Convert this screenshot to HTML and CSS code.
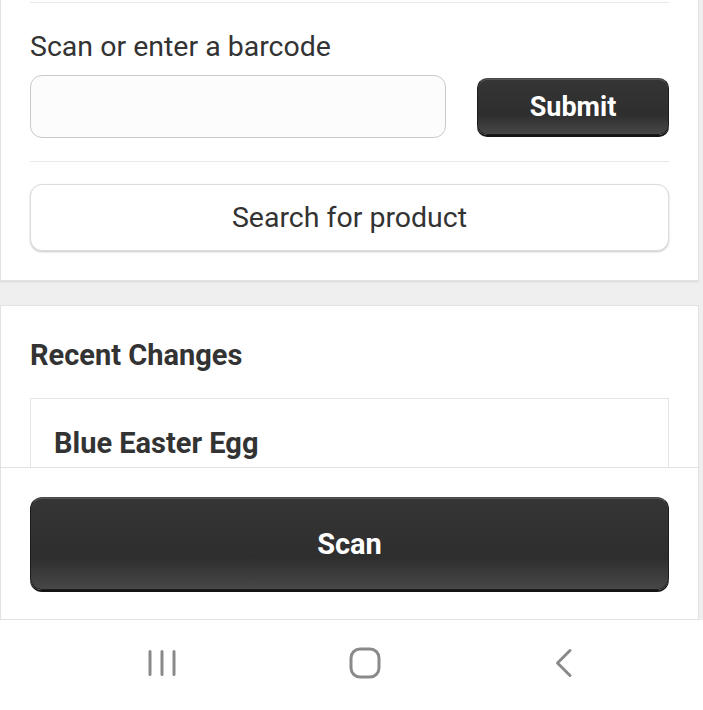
FILE: index.html
```html
<!DOCTYPE html>
<html>
<head>
<meta charset="utf-8">
<link rel="stylesheet" href="styles.css">
</head>
<body>
<div class="screen">
  <div class="app">
    <main class="scroll">
      <section class="card card-top">
        <hr class="divider">
        <label class="label" for="barcode">Scan or enter a barcode</label>
        <div class="entry-row">
          <input id="barcode" class="text-input" type="text">
          <button class="dark-btn submit-btn">Submit</button>
        </div>
        <hr class="divider divider-mid">
        <button class="light-btn">Search for product</button>
      </section>
      <section class="card card-recent">
        <h2 class="heading">Recent Changes</h2>
        <div class="change-item">
          <h3 class="item-title">Blue Easter Egg</h3>
        </div>
      </section>
    </main>
    <footer class="footer">
      <button class="dark-btn scan-btn">Scan</button>
    </footer>
  </div>
  <nav class="navbar">
    <svg class="nav-icon" width="30" height="30" viewBox="0 0 30 30">
      <path d="M3 3.5v23M15 3.5v23M27 3.5v23" stroke="#8a8a8a" stroke-width="3" stroke-linecap="round" fill="none"/>
    </svg>
    <svg class="nav-icon" width="32" height="32" viewBox="0 0 32 32">
      <rect x="2" y="2" width="28" height="28" rx="9" stroke="#8a8a8a" stroke-width="3" fill="none"/>
    </svg>
    <svg class="nav-icon" width="22" height="30" viewBox="0 0 22 30">
      <path d="M17 2.5L4.5 15L17 27.5" stroke="#8a8a8a" stroke-width="3" stroke-linecap="round" stroke-linejoin="round" fill="none"/>
    </svg>
  </nav>
</div>
</body>
</html>
```

FILE: styles.css
```css
* { box-sizing: border-box; }
html, body { margin: 0; padding: 0; }
body {
  width: 703px;
  height: 710px;
  overflow: hidden;
  background: #ffffff;
  font-family: Roboto, "Noto Sans", Arial, sans-serif;
  color: #333333;
}
.screen {
  display: flex;
  flex-direction: column;
  height: 710px;
}
.app {
  height: 620px;
  display: flex;
  flex-direction: column;
  background: #efefef;
}
.scroll {
  height: 467px;
  overflow: hidden;
  width: 699px;
}
.card {
  background: #ffffff;
  border: 1px solid #e2e2e2;
  padding: 0 29px;
}
.card-top {
  border-top: none;
  padding-top: 2px;
  padding-bottom: 29px;
  box-shadow: 0 1px 2px rgba(0,0,0,0.10);
}
.divider {
  border: none;
  height: 1px;
  background: #e9e9e9;
  margin: 0;
}
.label {
  display: block;
  font-size: 28.5px;
  line-height: 30px;
  margin-top: 29px;
  color: #333;
}
.entry-row {
  display: flex;
  align-items: center;
  gap: 31px;
  margin-top: 13px;
}
.text-input {
  width: 416px;
  height: 63px;
  border: 1px solid #c9c9c9;
  border-radius: 12px;
  background: #fcfcfc;
  outline: none;
}
.dark-btn {
  font-family: Roboto, "Noto Sans", Arial, sans-serif;
  font-weight: 700;
  font-size: 29px;
  color: #ffffff;
  border: 1px solid #1c1c1c;
  border-top-color: #4a4a4a;
  background: linear-gradient(to bottom, #353535 0%, #2e2e2e 65%, #474747 100%);
  box-shadow: 0 2px 0 #141414, inset 0 1px 0 #555;
  cursor: pointer;
}
.submit-btn {
  width: 192px;
  height: 57px;
  border-radius: 10px;
  font-size: 27px;
  padding-top: 2px;
}
.divider-mid {
  margin-top: 23px;
}
.light-btn {
  display: block;
  width: 100%;
  height: 67px;
  margin-top: 22px;
  background: #ffffff;
  border: 1px solid #dcdcdc;
  border-radius: 12px;
  box-shadow: 0 1px 2px rgba(0,0,0,0.22);
  font-family: Roboto, "Noto Sans", Arial, sans-serif;
  font-size: 28.5px;
  color: #333;
}
.card-recent {
  margin-top: 24px;
  padding-top: 34px;
  height: 300px;
}
.heading {
  margin: 0;
  font-size: 29px;
  line-height: 30px;
  font-weight: 700;
  color: #333;
}
.change-item {
  margin-top: 28px;
  border: 1px solid #e4e4e4;
  padding: 29px 23px;
  height: 200px;
}
.item-title {
  margin: 0;
  font-size: 29px;
  line-height: 30px;
  font-weight: 700;
  color: #333;
}
.footer {
  width: 699px;
  height: 153px;
  background: #ffffff;
  border: 1px solid #e2e2e2;
  padding: 29px 29px 0;
}
.scan-btn {
  display: block;
  width: 100%;
  height: 93px;
  border-radius: 12px;
}
.navbar {
  height: 90px;
  background: #ffffff;
  display: flex;
  justify-content: space-between;
  align-items: center;
  padding: 0 128px 4px 147px;
}
.nav-icon { display: block; }
```
